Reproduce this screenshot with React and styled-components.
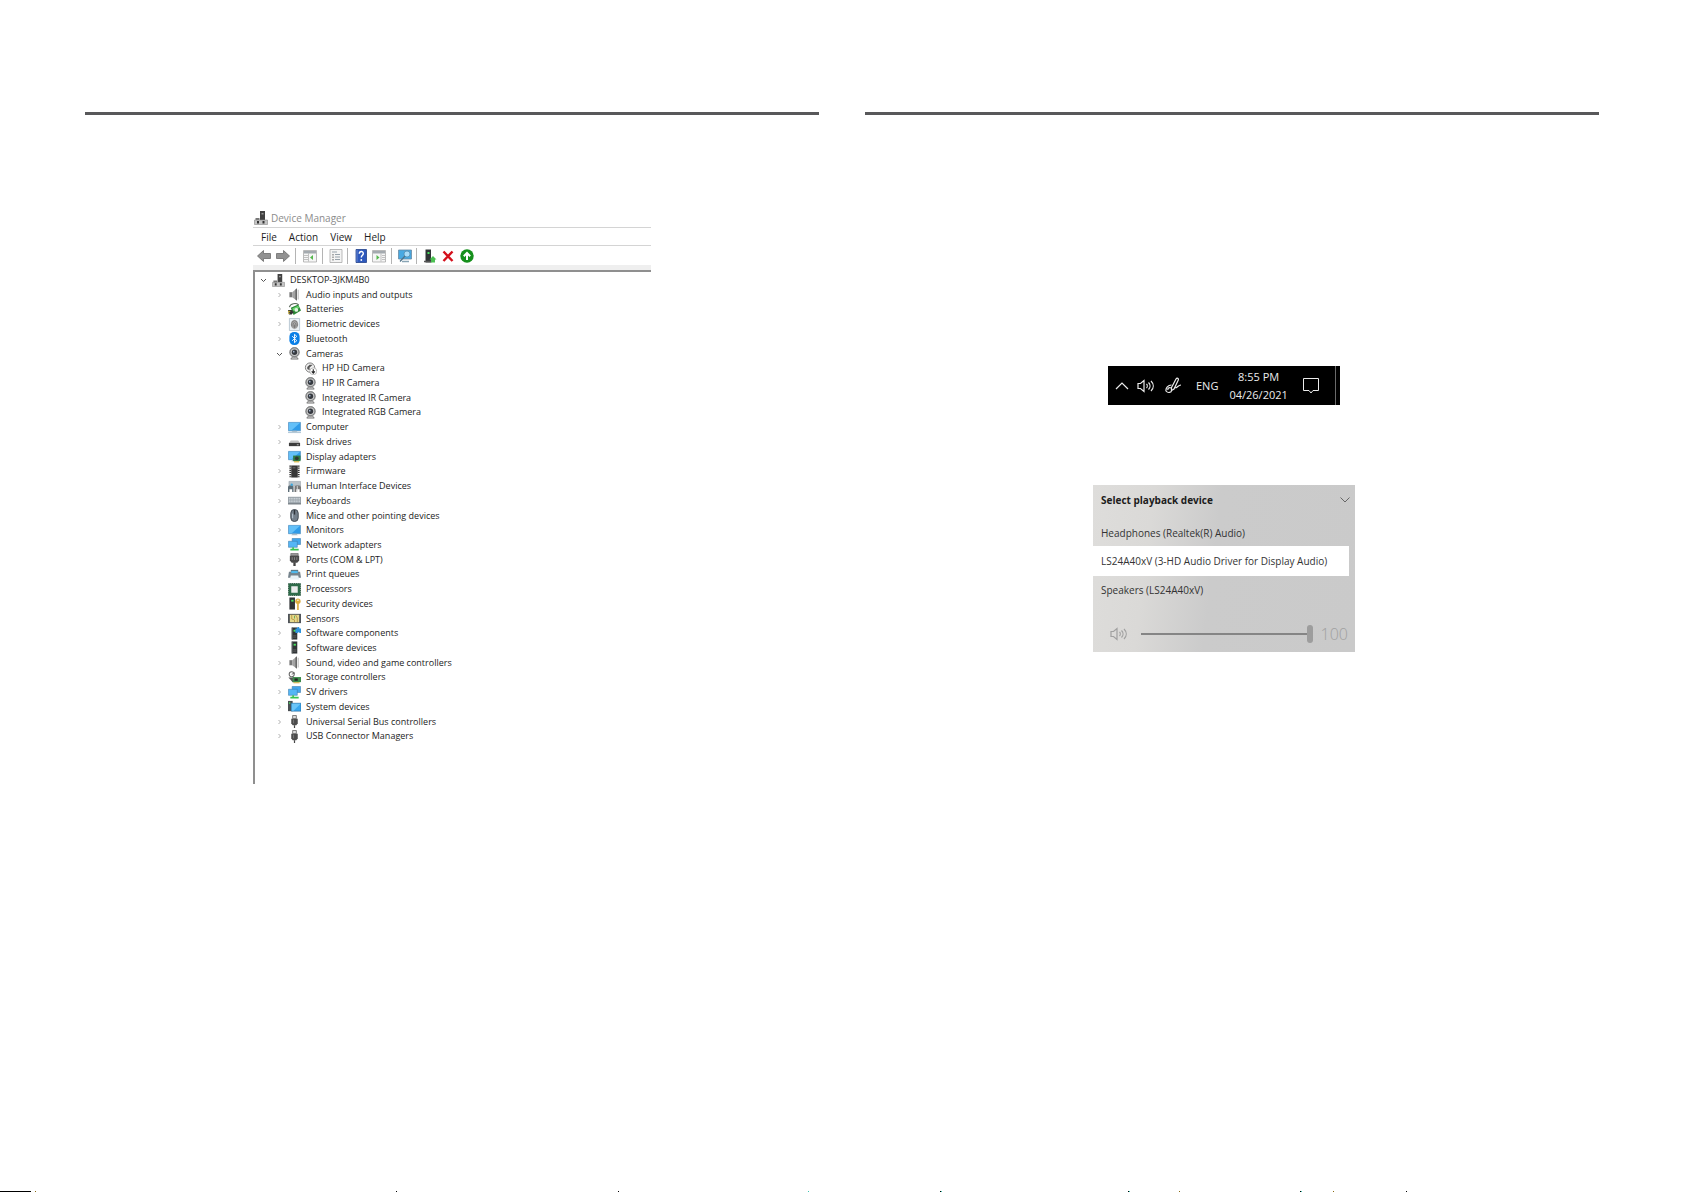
import { useState } from 'react';
import styled, { createGlobalStyle } from 'styled-components';

const GlobalStyle = createGlobalStyle`
    * {
        box-sizing: border-box;
    }
    body {
        margin: 0;
        background-color: #fff;
        font-family: "Open Sans", "Noto Sans", sans-serif;
        color: #1c1c1c;
    }
    button {
        padding: 0;
        border: 0;
        background: none;
        color: inherit;
        font: inherit;
        text-align: left;
        cursor: pointer;
    }
    svg {
        display: block;
        flex: none;
    }
`

const Page = styled.div`
    min-height: 100vh;
    display: flex;
    flex-direction: column;
`

const Spread = styled.main`
    flex: 1;
    display: grid;
    grid-template-columns: 1fr 1fr;
    gap: 46px;
    padding: 112px 86px 0 85px;
`

const Sheet = styled.section`
    display: flex;
    flex-direction: column;
    align-items: center;
    border-top: 3px solid #58585a;
    padding: ${props => props.$pad};
`

const Edge = styled.footer`
    height: 1px;
`

/* device manager */

const Manager = styled.article`
    width: 398px;
    max-width: 100%;
    font-size: 9px;
`

const TitleBar = styled.header`
    display: flex;
    align-items: center;
    gap: 3px;
    height: 19px;
    padding-left: 1px;
    font-size: 10px;
    color: #8c8c8c;
`

const Title = styled.h1`
    margin: 0;
    font-size: inherit;
    font-weight: 400;
`

const MenuBar = styled.nav`
    display: flex;
    align-items: center;
    gap: 12px;
    height: 19px;
    padding-left: 8px;
    border: solid #d4d4d4;
    border-width: 1px 0;
    font-size: 10px;
`

const Toolbar = styled.div`
    display: flex;
    align-items: center;
    height: 24px;
    padding-left: 1px;
    border-bottom: 5px solid #efefef;
`

const Tool = styled.button`
    display: flex;
    justify-content: center;
    width: ${props => props.$wide ? 19 : 17}px;
`

const Divider = styled.span`
    width: 1px;
    height: 16px;
    margin: 0 ${props => props.$after || 4}px 0 3px;
    background-color: #b4b4b4;
`

const Tree = styled.ul`
    display: grid;
    grid-auto-rows: 1fr;
    align-content: stretch;
    height: 514px;
    margin: 0;
    padding: 1px 0 40px;
    list-style: none;
    border: solid #8f8f8f;
    border-width: 2px 0 0 2px;
`

const Row = styled.li`
    display: grid;
    grid-template-columns: 10px 14px auto;
    align-items: center;
    column-gap: 4px;
    min-height: 0;
    height: 14px;
    padding-left: ${props => 3 + props.$level * 16}px;
    line-height: 14px;
    white-space: nowrap;
`

const Expander = styled.button`
    display: flex;
    justify-content: center;
`

/* taskbar */

const Stack = styled.div`
    display: flex;
    flex-direction: column;
    align-items: center;
    gap: 80px;
    width: 262px;
    max-width: 100%;
`

const Taskbar = styled.div`
    display: flex;
    align-items: center;
    width: 232px;
    height: 39px;
    padding: 0 4px 0 7px;
    background-color: #000;
    color: #ececec;
    font-size: 11px;
`

const TrayButton = styled.button`
    display: flex;
    margin-right: ${props => props.$space}px;
`

const Clock = styled.time`
    display: flex;
    flex-direction: column;
    align-items: center;
    margin-right: 14px;
    font-size: 11px;
    line-height: 18px;
`

const PeekLine = styled.span`
    width: 1px;
    height: 39px;
    margin-left: auto;
    background-color: #6a6a6a;
`

/* playback panel */

const Playback = styled.section`
    width: 100%;
    padding-bottom: 4px;
    background: linear-gradient(97deg, #dedddb 0%, #dad9d7 22%, #cbcbcb 46%, #cacaca 100%);
    font-size: 10px;
`

const PlaybackHead = styled.button`
    display: flex;
    align-items: center;
    justify-content: space-between;
    width: 100%;
    height: 34px;
    padding: 0 5px 4px 8px;
    font-size: 10px;
    font-weight: 700;
`

const Device = styled.button`
    display: block;
    width: calc(100% - 6px);
    height: ${props => props.$selected ? 30 : 27}px;
    padding-left: 8px;
    background-color: ${props => props.$selected ? '#fff' : 'transparent'};
    white-space: nowrap;
    color: #333;
`

const Volume = styled.label`
    display: flex;
    align-items: center;
    height: 28px;
    margin-top: 17px;
    padding: 0 7px 0 17px;
    color: #a0a0a0;
    font-size: 16px;
    font-weight: 300;
`

const Slider = styled.input`
    appearance: none;
    flex: 1;
    min-width: 0;
    height: 18px;
    margin: 0 8px 0 13px;
    background: transparent;
    &::-webkit-slider-runnable-track {
        height: 2px;
        background-color: #858585;
    }
    &::-webkit-slider-thumb {
        appearance: none;
        width: 6px;
        height: 18px;
        margin-top: -8px;
        border-radius: 3px;
        background-color: #9d9d9d;
    }
`

const Monitor = () => (
    <>
        <path d="M.500 1.500h13v9H.500z" fill="#2f9be8" stroke="#4d87b5" strokeWidth=".6" />
        <path d="M1 2h12L4 10H1z" fill="#63c0f8" />
        <path d="M5 10.500h4l1.500 1.500h-7z" fill="#a9bac6" />
    </>
)

const Tower = () => (
    <>
        <path d="M4 .500h6v13H4z" fill="#303436" />
        <path d="M4 .500h1v13H4z" fill="#606668" />
        <path d="M6 3h2.500v2H6z" fill="#49e05e" />
        <path d="M5.500 9.500h3.500M5.500 11h3.500" stroke="#777" strokeWidth=".6" />
    </>
)

const Webcam = () => (
    <>
        <path d="M3 13 5 10.500h4l2 2.500z" fill="#d5d5d5" stroke="#777" strokeWidth="1" />
        <circle cx="7" cy="5.700" r="5.300" fill="#8b8d8e" stroke="#666" strokeWidth=".5" />
        <circle cx="7" cy="5.700" r="4" fill="#c8c8c8" />
        <circle cx="7" cy="5.700" r="2.900" fill="#35393f" />
        <circle cx="6.200" cy="5" r=".9" fill="#a8b9d0" />
    </>
)

const Screens = () => (
    <>
        <path d="M4.500 .500h9v6.500h-9z" fill="#42a6ec" stroke="#3a7aaa" strokeWidth=".6" />
        <path d="M.500 3.500h9.500V10H.500z" fill="#54b6f5" stroke="#3a7aaa" strokeWidth=".6" />
        <path d="M5.500 10v2M2.500 12.500h9" stroke="#38c453" strokeWidth="1.800" />
    </>
)

const Plug = () => (
    <>
        <path d="M5 .500h4v3.500H5z" fill="#ddd" stroke="#555" strokeWidth=".8" />
        <path d="M3.500 4h7v5L9 11H5L3.500 9z" fill="#4c4c4c" />
        <path d="M6 5v4" stroke="#888" strokeWidth=".8" />
        <path d="M7 11v3" stroke="#444" strokeWidth="1.300" />
    </>
)

const Speaker = () => (
    <>
        <path d="M1.500 4.500H4.500v5.500H1.500z" fill="#777" />
        <path d="M4.500 4.500 9.500 .500v13L4.500 10z" fill="#a3a3a3" />
        <path d="M8 1.700 9.700 .300v13.400L8 12.300z" fill="#686868" />
        <path d="M11 2v10.500" stroke="#c2c2c2" strokeWidth="1.200" />
    </>
)

const drawings = {
    pc: (
        <>
            <path d="M6 0h5v9H6z" fill="#414141" />
            <path d="M7.500 2h2v1.500h-2z" fill="#999" />
            <path d="M1.500 7h4v4h-4z" fill="#777" />
            <path d="M.500 9h13v4.500H.500z" fill="#c4c4c4" stroke="#888" strokeWidth=".6" />
            <path d="M3 10h2v2.500H3zM8.500 10h2v2.500h-2z" fill="#333" />
        </>
    ),
    speaker: <Speaker />,
    battery: (
        <>
            <path d="M1.500 4.500c1-4 7-5 10-2.500" fill="none" stroke="#5c6b5c" strokeWidth="1.200" />
            <path d="M3 5 11 1.500l3 6.500-8 5z" fill="#2c8738" />
            <path d="M4.500 6 11 3l1 2.500L6 8.500z" fill="#6cd66f" />
            <circle cx="9" cy="7.500" r="2" fill="#e6f5e5" />
            <path d="M0 7.500h4L6 10l-2 2.500H1z" fill="#333" />
            <path d="M0 9h2.500M0 11h2" stroke="#e0c030" strokeWidth="1" />
        </>
    ),
    finger: (
        <>
            <path d="M1.500.500h11v13h-11z" fill="#eaf1f6" stroke="#a8bac8" strokeWidth=".8" />
            <ellipse cx="7" cy="7" rx="4" ry="5" fill="#b5b5b5" />
            <path d="M4 9V6a3 3 0 0 1 6 0v3M5.500 10.500V6.500a1.500 1.500 0 0 1 3 0v4M7 7v4" fill="none" stroke="#666" strokeWidth=".8" />
        </>
    ),
    bluetooth: (
        <>
            <rect x="1.500" y="0" width="11" height="14" rx="5" fill="#0a7fe6" />
            <path d="m4.500 4.500 5 4.800L7 11.500v-9l2.500 2.200-5 4.800" fill="none" stroke="#fff" strokeWidth="1" />
        </>
    ),
    webcam: <Webcam />,
    webcamOff: (
        <>
            <circle cx="6.500" cy="6" r="5" fill="#f1f1f1" stroke="#777" strokeWidth="1" />
            <path d="M3.500 7.500V5.500L6 3h3.500L6 6v3z" fill="#555" />
            <circle cx="10" cy="10" r="3.700" fill="#fff" stroke="#888" strokeWidth=".6" />
            <path d="M10 7.800v3.700M8.300 10l1.700 1.900L11.700 10" fill="none" stroke="#222" strokeWidth="1.200" />
        </>
    ),
    monitor: <Monitor />,
    computer: (
        <>
            <Monitor />
            <path d="M0 11.500h14v1.500H0z" fill="#b4c9d8" />
        </>
    ),
    disk: (
        <>
            <path d="M3 6h8l2 3H1z" fill="#c4c4c4" />
            <path d="M1 8.500h12V12H1z" fill="#3c3c3c" />
            <path d="M9.500 10.500h2" stroke="#ddd" strokeWidth=".8" />
        </>
    ),
    display: (
        <>
            <Monitor />
            <path d="M5.500 6h8v6h-8z" fill="#2f7b45" />
            <circle cx="9.500" cy="9" r="2" fill="#30382f" />
            <path d="M6.500 12.700h5.500" stroke="#d8b132" strokeWidth="1.200" />
        </>
    ),
    chip: (
        <>
            <path d="M3.500 .500h7v13h-7z" fill="#383838" />
            <path d="M2.500 .500v13M11.500 .500v13" stroke="#333" strokeWidth="2" strokeDasharray="1.300 1" />
            <path d="M5 3h3" stroke="#888" strokeWidth=".7" />
        </>
    ),
    hid: (
        <>
            <path d="M1 1.500h12.500v5H1z" fill="#b9c2c8" stroke="#87929a" strokeWidth=".5" />
            <path d="M0 7.500c0-2 6-2 6 0V13H4.500v-3h-3v3H0z" fill="#5d6d77" />
            <path d="M7 7.500c0-2 7-2 7 0V13h-1.500v-3H9v3H7z" fill="#777" />
            <circle cx="4" cy="5" r="1.300" fill="#39a6dd" />
            <path d="M10 6.500v6" stroke="#ddd" strokeWidth="1" />
        </>
    ),
    keyboard: (
        <>
            <path d="M0 3h14v8H0z" fill="#98a1a8" />
            <path d="M1 4.700h12M1 6.500h12M1 8.300h12" stroke="#e3e9ed" strokeWidth=".8" strokeDasharray="1.400 .4" />
            <path d="M0 10.700h14" stroke="#5e666c" strokeWidth=".8" />
        </>
    ),
    mouse: (
        <>
            <rect x="3" y=".500" width="8" height="13" rx="4" fill="#747f8b" stroke="#3e454e" />
            <path d="M7 1v5" stroke="#2f343a" strokeWidth="1.500" />
            <path d="M5 5v5" stroke="#c3ceda" strokeWidth="1" />
        </>
    ),
    screens: <Screens />,
    port: (
        <>
            <path d="M3 .500h8V3H3z" fill="#999" stroke="#555" strokeWidth=".6" />
            <path d="M2 3h10v5l-2 2.500H4L2 8z" fill="#4a4a4a" />
            <path d="M4.500 4.500v3M7 4.500v3M9.500 4.500v3" stroke="#999" strokeWidth=".8" />
            <path d="M7 10v4" stroke="#444" strokeWidth="2.500" />
        </>
    ),
    printer: (
        <>
            <path d="M3 2h8v4H3z" fill="#5c6a72" />
            <path d="M1 4h12l1 6.500H0z" fill="#75838c" />
            <path d="M3.500 3h7v2.500h-7z" fill="#4fb9ec" />
            <path d="M3 8h8l1 4.500H2z" fill="#e8f2f7" />
        </>
    ),
    cpu: (
        <>
            <path d="M.500 .500h13v13H.500z" fill="#2f6b49" />
            <path d="M.500 .500h13v13H.500z" fill="none" stroke="#234d37" strokeWidth="1" strokeDasharray="1 1" />
            <path d="M3.500 3.500h7v7h-7z" fill="#ececec" />
        </>
    ),
    security: (
        <>
            <path d="M1.500 .500h6v13h-6z" fill="#303436" />
            <path d="M3.500 3H6v2H3.500z" fill="#49e05e" />
            <circle cx="10.700" cy="4.500" r="2.900" fill="#dcae42" />
            <path d="M10.700 5v9" stroke="#dcae42" strokeWidth="1.800" />
            <circle cx="10.700" cy="3.600" r=".8" fill="#fff" />
        </>
    ),
    sensor: (
        <>
            <path d="M0 2h14v10H0z" fill="#50545a" />
            <path d="M2 3h10v8H2z" fill="#e6d98c" />
            <path d="M4 3v4.500l3 1V11M8 3l2 3.500V11" fill="none" stroke="#b08b37" strokeWidth=".8" />
            <path d="M7 4v3" stroke="#66ab59" strokeWidth="1" />
        </>
    ),
    component: (
        <>
            <Tower />
            <path d="M8 1.500h1.700c0-2 2.700-2 2.700 0H14v5h-1.500c0-1-2-1-2 0H8z" fill="#2f94dc" />
        </>
    ),
    tower: <Tower />,
    storage: (
        <>
            <circle cx="4" cy="3.500" r="2.700" fill="none" stroke="#666" strokeWidth="1.200" />
            <path d="M4 3.500 7.500 2" stroke="#666" strokeWidth="1" />
            <path d="M.500 7h7l4 2v3H5z" fill="#555" />
            <path d="M5 6.500h9v5.500H5z" fill="#3c8c4b" />
            <path d="M7 8h3.500v2.500H7z" fill="#222" />
            <path d="M6 12.700h6.500" stroke="#d8b132" strokeWidth="1" />
        </>
    ),
    system: (
        <>
            <path d="M0 1h5v11H0z" fill="#4a4f53" />
            <path d="M1 2.500h1.500V4H1z" fill="#49e05e" />
            <path d="M3.500 3.500H14V12H3.500z" fill="#38a6ee" stroke="#2a6d9e" strokeWidth=".7" />
            <path d="M4 4h9.500L6 11.500H4z" fill="#6ac5f8" />
        </>
    ),
    plug: <Plug />,
    back: <path d="M.500 7 6.500 1.500v3H13.500v5H6.500v3z" fill="#929292" stroke="#6c6c6c" strokeWidth=".8" />,
    forward: <path d="M13.500 7 7.500 1.500v3H.500v5h7v3z" fill="#929292" stroke="#6c6c6c" strokeWidth=".8" />,
    tree: (
        <>
            <path d="M.500 1.500h13v11.500H.500z" fill="#f6f6f6" stroke="#aaa" strokeWidth=".8" />
            <path d="M1 2h12v2.500H1z" fill="#a4aaaf" />
            <path d="M5.500 4.500v8M1 6.500h4M1 8.500h4M1 10.500h4" stroke="#aaa" strokeWidth=".7" />
            <path d="M10 6v5L7 8.500z" fill="#55b84d" />
        </>
    ),
    properties: (
        <>
            <path d="M1 .500h12v13H1z" fill="#f4f4f4" stroke="#aaa" strokeWidth=".8" />
            <path d="M3 3h5M6 5.500h5M6 8h5M6 10.500h5" stroke="#97a2ab" strokeWidth="1" />
            <path d="M3 5h2v1.500H3zM3 7.500h2V9H3zM3 10h2v1.500H3z" fill="#aaa" />
        </>
    ),
    help: (
        <>
            <path d="M2 .500h10.500v13H2z" fill="#2d58bd" stroke="#23428a" strokeWidth=".8" />
            <path d="M3 1v12" stroke="#7794d6" strokeWidth=".8" />
            <path d="M5.300 4.800c0-3 4-3 4-.3 0 1.800-2 1.800-2 4" fill="none" stroke="#fff" strokeWidth="1.400" />
            <circle cx="7.300" cy="11" r=".9" fill="#fff" />
        </>
    ),
    action: (
        <>
            <path d="M.500 1.500h13v11.500H.500z" fill="#f6f6f6" stroke="#aaa" strokeWidth=".8" />
            <path d="M1 2h12v2.500H1z" fill="#a4aaaf" />
            <path d="M9 4.500v8M10 6.500h3M10 8.500h3M10 10.500h3" stroke="#aaa" strokeWidth=".7" />
            <path d="M4.500 6v5l3-2.500z" fill="#55b84d" />
        </>
    ),
    scan: (
        <>
            <path d="M.500 1h13v9H.500z" fill="#48a9e2" stroke="#6b8ca3" strokeWidth=".8" />
            <circle cx="9" cy="5" r="3" fill="#a9dcf8" stroke="#4d86a9" strokeWidth=".7" />
            <path d="m7 7-5 5.500" stroke="#4f7288" strokeWidth="1.200" />
            <path d="M4 12.500h7" stroke="#8aa5b5" strokeWidth="1.500" />
        </>
    ),
    addDevice: (
        <>
            <path d="M2.500 .500h5.500v13H2.500z" fill="#303436" />
            <path d="M4.500 3h2v2h-2z" fill="#49e05e" />
            <path d="M1 12.500h8" stroke="#555" strokeWidth="1.500" />
            <path d="M8 13.500v-3H6.500L10 7l3.500 3.500H12v3z" fill="#4cc052" />
        </>
    ),
    remove: <path d="m2.500 2.500 9 9.500M11.500 2.500l-9 9.500" stroke="#d4101c" strokeWidth="2.400" />,
    enable: (
        <>
            <circle cx="7" cy="7" r="6.700" fill="#16901c" />
            <path d="M7 11V4.500M3.800 7.200 7 4l3.200 3.200" fill="none" stroke="#fff" strokeWidth="2" />
        </>
    ),
}

function Icon({ name, size = 14 }) {
    return (
        <svg width={size} height={size} viewBox="0 0 14 14" aria-hidden="true">
            {drawings[name]}
        </svg>
    )
}

function Volumes() {
    return (
        <svg width="18" height="14" viewBox="0 0 18 14" fill="none" stroke="currentColor" strokeWidth="1.200" aria-hidden="true">
            <path d="M1 4.500h2.500L7 1.500v11L3.500 9.500H1z" />
            <path d="M9.500 5c1 1 1 3 0 4M11.500 3.500c2 2 2 5 0 7M14 2c3 3 3 7 0 10" />
        </svg>
    )
}

const devices = [
    ['DESKTOP-3JKM4B0', 'pc', 0, 'open'],
    ['Audio inputs and outputs', 'speaker', 1],
    ['Batteries', 'battery', 1],
    ['Biometric devices', 'finger', 1],
    ['Bluetooth', 'bluetooth', 1],
    ['Cameras', 'webcam', 1, 'open'],
    ['HP HD Camera', 'webcamOff', 2],
    ['HP IR Camera', 'webcam', 2],
    ['Integrated IR Camera', 'webcam', 2],
    ['Integrated RGB Camera', 'webcam', 2],
    ['Computer', 'computer', 1],
    ['Disk drives', 'disk', 1],
    ['Display adapters', 'display', 1],
    ['Firmware', 'chip', 1],
    ['Human Interface Devices', 'hid', 1],
    ['Keyboards', 'keyboard', 1],
    ['Mice and other pointing devices', 'mouse', 1],
    ['Monitors', 'monitor', 1],
    ['Network adapters', 'screens', 1],
    ['Ports (COM & LPT)', 'port', 1],
    ['Print queues', 'printer', 1],
    ['Processors', 'cpu', 1],
    ['Security devices', 'security', 1],
    ['Sensors', 'sensor', 1],
    ['Software components', 'component', 1],
    ['Software devices', 'tower', 1],
    ['Sound, video and game controllers', 'speaker', 1],
    ['Storage controllers', 'storage', 1],
    ['SV drivers', 'screens', 1],
    ['System devices', 'system', 1],
    ['Universal Serial Bus controllers', 'plug', 1],
    ['USB Connector Managers', 'plug', 1],
]

const outputs = [
    'Headphones (Realtek(R) Audio)',
    'LS24A40xV (3-HD Audio Driver for Display Audio)',
    'Speakers (LS24A40xV)',
]

function DeviceRow({ name, icon, level, open }) {
    return (
        <Row $level={level}>
            {level < 2 ? (
                <Expander aria-label={name} aria-expanded={Boolean(open)}>
                    <svg width="8" height="8" viewBox="0 0 8 8" fill="none" stroke={open ? '#555' : '#b0b0b0'}>
                        <path d={open ? 'm2 3 2.500 2.500L7 3' : 'm3.500 2 2 2-2 2'} />
                    </svg>
                </Expander>
            ) : <span />}
            <Icon name={icon} size={13} />
            <span>{name}</span>
        </Row>
    )
}

function DeviceManager() {
    return (
        <Manager>
            <TitleBar>
                <Icon name="pc" />
                <Title>Device Manager</Title>
            </TitleBar>
            <MenuBar>
                <button>File</button>
                <button>Action</button>
                <button>View</button>
                <button>Help</button>
            </MenuBar>
            <Toolbar>
                <Tool $wide aria-label="Back"><Icon name="back" /></Tool>
                <Tool $wide aria-label="Forward"><Icon name="forward" /></Tool>
                <Divider />
                <Tool $wide aria-label="Console tree"><Icon name="tree" /></Tool>
                <Divider />
                <Tool aria-label="Properties"><Icon name="properties" /></Tool>
                <Divider />
                <Tool aria-label="Help"><Icon name="help" /></Tool>
                <Tool $wide aria-label="Action pane"><Icon name="action" /></Tool>
                <Divider />
                <Tool aria-label="Scan"><Icon name="scan" /></Tool>
                <Divider />
                <Tool aria-label="Update driver"><Icon name="addDevice" /></Tool>
                <Tool $wide aria-label="Uninstall"><Icon name="remove" /></Tool>
                <Tool $wide aria-label="Enable"><Icon name="enable" /></Tool>
            </Toolbar>
            <Tree>
                {devices.map(([name, icon, level, open]) => (
                    <DeviceRow key={name} name={name} icon={icon} level={level} open={open} />
                ))}
            </Tree>
        </Manager>
    )
}

function Tray() {
    return (
        <Taskbar>
            <TrayButton $space={8} aria-label="Hidden icons">
                <svg width="14" height="14" viewBox="0 0 14 14" fill="none" stroke="currentColor" strokeWidth="1.200">
                    <path d="m1 10 6-6 6 6" />
                </svg>
            </TrayButton>
            <TrayButton $space={10} aria-label="Volume"><Volumes /></TrayButton>
            <TrayButton $space={14} aria-label="Pen">
                <svg width="17" height="17" viewBox="0 0 17 17" fill="none" stroke="currentColor" strokeWidth="1.200">
                    <path d="M6.500 10.500 11 2c1-1.500 3-.5 2.300 1L9 12l-2.500 1.500z" />
                    <path d="M6.500 8C3 8 .500 11 1 14c2 2.500 5.500 1.500 5.500-.5M9.500 10.500c2.500 1.500 3-2.500 6.500-2.500M6 11c-2-1-3.500.5-3 2" />
                </svg>
            </TrayButton>
            <TrayButton $space={11}>ENG</TrayButton>
            <Clock dateTime="2021-04-26T20:55">
                <span>8:55 PM</span>
                <span>04/26/2021</span>
            </Clock>
            <TrayButton $space={0} aria-label="Notifications">
                <svg width="18" height="18" viewBox="0 0 18 18" fill="none" stroke="currentColor">
                    <path d="M1.500 1.500h15v12H11l-2 2.500-2-2.500H1.500z" />
                </svg>
            </TrayButton>
            <PeekLine />
        </Taskbar>
    )
}

function PlaybackPanel() {
    const [selected, setSelected] = useState(outputs[1])
    const [volume, setVolume] = useState(100)
    return (
        <Playback>
            <PlaybackHead>
                Select playback device
                <svg width="10" height="10" viewBox="0 0 10 10" fill="none" stroke="#666">
                    <path d="m.500 2.500 4.500 4.500 4.500-4.500" />
                </svg>
            </PlaybackHead>
            {outputs.map(name => (
                <Device key={name} $selected={name === selected} onClick={() => setSelected(name)}>
                    {name}
                </Device>
            ))}
            <Volume>
                <Volumes />
                <Slider
                    type="range"
                    aria-label="Volume"
                    value={volume}
                    onChange={e => setVolume(Number(e.target.value))}
                />
                {volume}
            </Volume>
        </Playback>
    )
}

export default function App() {
    return (
        <Page>
            <GlobalStyle />
            <Spread>
                <Sheet $pad="93px 0 0">
                    <DeviceManager />
                </Sheet>
                <Sheet $pad="251px 16px 0 0">
                    <Stack>
                        <Tray />
                        <PlaybackPanel />
                    </Stack>
                </Sheet>
            </Spread>
            <Edge>
                <svg width="100%" height="1" viewBox="0 0 1685 1" preserveAspectRatio="none" aria-hidden="true">
                    <path d="M0 0h31v1H0zM396 0h1v1h-1zM618 0h1v1h-1zM940 0h1v1h-1zM1128 0h1v1h-1zM1300 0h1v1h-1zM1406 0h1v1h-1z" />
                    <path d="M35 0h1v1h-1zM1179 0h1v1h-1zM1333 0h1v1h-1z" fill="#8a6a10" />
                    <path d="M808 0h1v1h-1zM941 0h1v1h-1zM1129 0h1v1h-1zM1301 0h1v1h-1z" fill="#3fc8b4" />
                </svg>
            </Edge>
        </Page>
    )
}
